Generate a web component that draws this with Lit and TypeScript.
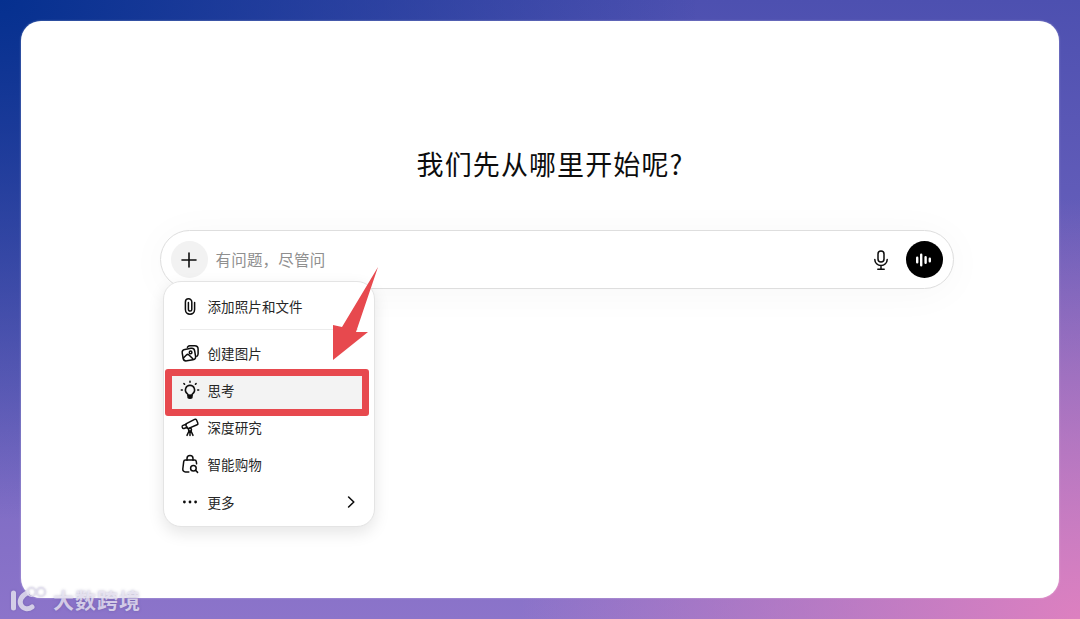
import { LitElement, html, css, svg } from "lit";
import { customElement } from "lit/decorators.js";

const ic = (c: unknown) => html`<svg class="ic" viewBox="0 0 20 20" fill="none" stroke="#0d0d0d" stroke-width="1.5" stroke-linecap="round" stroke-linejoin="round">${c}</svg>`;

const items = [
  { t: "创建图片", i: svg`<path d="M7.4 4.2 8 3.6c.5-.6 1.1-.9 1.9-.9h4.8c1.9 0 3.4 1.5 3.4 3.4v4.6c0 1.1-.5 2-1.3 2.6"/><rect x="2.6" y="5.8" width="12.6" height="11.6" rx="3.2" transform="rotate(-10 8.9 11.6)"/><circle cx="10.6" cy="9.4" r="1.3"/><path d="M3.4 15l3-3c.8-.8 1.9-.7 2.6 0l3.8 3.8"/>` },
  { t: "思考", sel: true, i: svg`<path d="M10 5.2a4.7 4.7 0 0 0-2.8 8.4c.6.5.9 1 .9 1.6h3.8c0-.6.3-1.1.9-1.6A4.7 4.7 0 0 0 10 5.2Z"/><path d="M8.2 17.8c.5.5 3.1.5 3.6 0l.3-2.4H7.9Z" fill="#0d0d0d"/><path d="M10 1.3v1M3.9 3.6l.7.7M16.1 3.6l-.7.7M1.3 10h1M17.7 10h1"/>` },
  { t: "深度研究", i: svg`<path d="M6.4 6.6 14.6 2.4c.8-.4 1.6-.1 1.9.6l1.3 3c.3.7 0 1.5-.7 1.8L8.6 11.4c-.6.3-1.3 0-1.6-.6L5.8 8c-.2-.6 0-1.1.6-1.4Z"/><path d="M6.2 7.2 3 8.4c-.7.3-1 1-.8 1.6l.3.8c.2.6.9.9 1.5.7l3.4-1.2"/><circle cx="10" cy="12.8" r="1.5"/><path d="M9 14 7 18.4M11 14l2 4.4M10 14.4v4"/>` },
  { t: "智能购物", i: svg`<path d="M7 6.2V4.4a3 3 0 0 1 6 0v1.8"/><path d="M8.8 18H5.4c-1.6 0-2.8-1.4-2.6-3l.9-7.4c.1-.9.9-1.5 1.8-1.5h9c.9 0 1.7.6 1.8 1.5l.3 2.2"/><circle cx="13.4" cy="14.2" r="2.8"/><path d="m15.5 16.3 2.1 2.1"/>` },
];

@customElement("app-root")
export class AppRoot extends LitElement {
  static styles = css`
    :host {
      display: block;
      width: 1080px;
      height: 619px;
      overflow: hidden;
      box-sizing: border-box;
      padding: 21px;
      position: relative;
      font-family: "Inter", "Liberation Sans", "Noto Sans CJK SC", sans-serif;
      color: #0d0d0d;
      background:
        radial-gradient(560px 420px at 100% 100%, #dd80c0 0%, rgba(221, 128, 192, 0) 100%),
        radial-gradient(700px 520px at 0% 0%, #05308f 0%, rgba(5, 48, 143, 0) 100%),
        linear-gradient(180deg, #4d50b0 0%, #8c74ca 100%);
    }
    .card {
      width: 1038px;
      height: 577px;
      border-radius: 20px;
      background: #fff;
      display: flex;
      flex-direction: column;
      align-items: center;
      box-shadow: 0 0 2px rgba(255, 255, 255, 0.5);
    }
    h1 {
      margin: 126px 0 0 20px;
      height: 34px;
      font: 400 27px/34px "Noto Sans CJK SC", sans-serif;
      letter-spacing: 1.1px;
    }
    .composer {
      position: relative;
      margin: 49px 0 0 33px;
      width: 794px;
      height: 59px;
      box-sizing: border-box;
      border: 1px solid #dedede;
      border-radius: 30px;
      background: #fff;
      box-shadow: 0 4px 40px rgba(0, 0, 0, 0.035);
      display: flex;
      align-items: center;
      padding: 0 10px;
      flex-shrink: 0;
    }
    .plus {
      width: 37px;
      height: 37px;
      border-radius: 50%;
      background: #f2f2f2;
      display: flex;
      align-items: center;
      justify-content: center;
      flex-shrink: 0;
    }
    .placeholder {
      margin: 0 0 2px 8px;
      flex: 1;
      font: 400 15.5px/20px "Noto Sans CJK SC", sans-serif;
      letter-spacing: 0.2px;
      color: #8f8f8f;
    }
    .mic {
      width: 22px;
      height: 22px;
      margin-right: 14px;
      display: block;
    }
    .voice {
      width: 37px;
      height: 37px;
      border-radius: 50%;
      background: #000;
      display: flex;
      align-items: center;
      justify-content: center;
      flex-shrink: 0;
    }
    .menu {
      position: absolute;
      left: 2px;
      top: 50px;
      width: 212px;
      height: 246px;
      box-sizing: border-box;
      border: 1px solid #e4e4e4;
      border-radius: 18px;
      background: #fff;
      box-shadow: 0 6px 16px rgba(0, 0, 0, 0.1);
      padding: 5px 0 0;
    }
    .row {
      height: 37.2px;
      margin: 0 6px;
      padding: 0 10px;
      box-sizing: border-box;
      display: flex;
      align-items: center;
      gap: 8px;
      font: 400 13.5px/18px "Noto Sans CJK SC", sans-serif;
      letter-spacing: 0.1px;
      color: #262626;
      border-radius: 2px;
    }
    .row.sel {
      background: #f3f3f3;
    }
    .row .grow {
      flex: 1;
    }
    .ic {
      width: 20px;
      height: 20px;
      display: block;
      flex-shrink: 0;
    }
    .chev {
      width: 14px;
      height: 14px;
      display: block;
    }
    .sep {
      height: 1px;
      background: #ececec;
      margin: 5px 16px 4px;
    }
    .highlight {
      position: absolute;
      left: 165px;
      top: 369px;
      width: 204px;
      height: 47px;
      box-sizing: border-box;
      border: 7px solid #e7494e;
      border-radius: 3px;
    }
    .arrow {
      position: absolute;
      left: 328px;
      top: 262px;
      width: 56px;
      height: 102px;
      display: block;
    }
    .mark {
      position: absolute;
      left: 8px;
      top: 584px;
      display: flex;
      align-items: center;
      gap: 3px;
      color: rgba(236, 232, 245, 0.78);
      font: 700 21px/28px "Noto Sans CJK SC", sans-serif;
      letter-spacing: 1px;
      text-shadow: 0 0 3px rgba(70, 60, 120, 0.35);
    }
    .mark svg {
      width: 42px;
      height: 30px;
      display: block;
      filter: drop-shadow(0 0 1px rgba(70, 60, 120, 0.35));
    }
  `;

  render() {
    return html`
      <div class="card">
        <h1>我们先从哪里开始呢?</h1>
        <div class="composer">
          <div class="plus">
            <svg width="18" height="18" viewBox="0 0 18 18" fill="none" stroke="#0d0d0d" stroke-width="1.6" stroke-linecap="round"><path d="M9 2v14M2 9h14"/></svg>
          </div>
          <div class="placeholder">${"有问题\uFF0C尽管问"}</div>
          <svg class="mic" viewBox="0 0 22 22" fill="none" stroke="#0d0d0d" stroke-width="1.5" stroke-linecap="round"><rect x="8" y="2" width="6" height="11" rx="3"/><path d="M4.8 10.4a6.2 6.2 0 0 0 12.4 0M11 16.6V20M7.8 20.2h6.4"/></svg>
          <div class="voice">
            <svg width="18" height="18" viewBox="0 0 18 18" fill="none" stroke="#fff" stroke-width="2.4" stroke-linecap="round"><path d="M2.2 6.7v4.6M6.2 3.7v10.6M10.6 6.2v5.6M14.8 7.7v2.6"/></svg>
          </div>
          <div class="menu">
            <div class="row">
              ${ic(svg`<path d="M14.6 6.4v7.2a4.6 4.6 0 0 1-9.2 0V6a3.2 3.2 0 0 1 6.4 0v7.4a1.7 1.7 0 0 1-3.4 0V6.6"/>`)}
              <span>添加照片和文件</span>
            </div>
            <div class="sep"></div>
            ${items.map(
              (it) => html`<div class="row ${it.sel ? "sel" : ""}">${ic(it.i)}<span>${it.t}</span></div>`
            )}
            <div class="row">
              ${ic(svg`<circle cx="4.4" cy="10" r="1.4" fill="#0d0d0d" stroke="none"/><circle cx="10" cy="10" r="1.4" fill="#0d0d0d" stroke="none"/><circle cx="15.6" cy="10" r="1.4" fill="#0d0d0d" stroke="none"/>`)}
              <span class="grow">更多</span>
              <svg class="chev" viewBox="0 0 14 14" fill="none" stroke="#0d0d0d" stroke-width="1.6" stroke-linecap="round" stroke-linejoin="round"><path d="M4.6 2 9.8 7l-5.2 5"/></svg>
            </div>
          </div>
        </div>
      </div>
      <div class="highlight"></div>
      <svg class="arrow" viewBox="0 0 56 102"><path d="M50 5 28 70 40 70 5 98 5 63 14 65Z" fill="#e7494e"/></svg>
      <div class="mark">
        <svg viewBox="0 0 42 30" fill="none" stroke="rgba(228,224,240,.85)" stroke-linecap="round">
          <path d="M5.5 9v15" stroke-width="5"/>
          <path d="M19 9c-6 3-8 8-6 12 2 4 7 5 11 2" stroke-width="5"/>
          <circle cx="23.5" cy="8" r="4.2" stroke-width="1.5"/>
          <circle cx="33" cy="8" r="4.2" stroke-width="1.5"/>
        </svg>
        <span>大数跨境</span>
      </div>
    `;
  }
}
